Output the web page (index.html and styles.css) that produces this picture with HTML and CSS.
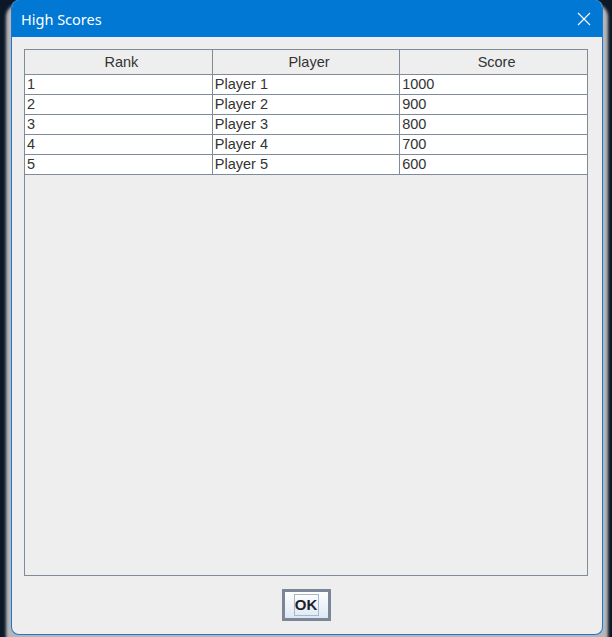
FILE: index.html
```html
<!DOCTYPE html>
<html>
<head>
<meta charset="utf-8">
<link rel="stylesheet" href="styles.css">
</head>
<body>
<div class="window">
  <div class="titlebar">
    <span class="title">High Scores</span>
    <svg class="close" width="14" height="14" viewBox="0 0 14 14"><path d="M1 1 L13 13 M13 1 L1 13" stroke="#fff" stroke-width="1.1" fill="none"/></svg>
  </div>
  <div class="content">
    <div class="pane">
      <table class="scores">
        <thead>
          <tr><th>Rank</th><th>Player</th><th>Score</th></tr>
        </thead>
        <tbody>
          <tr><td>1</td><td>Player 1</td><td>1000</td></tr>
          <tr><td>2</td><td>Player 2</td><td>900</td></tr>
          <tr><td>3</td><td>Player 3</td><td>800</td></tr>
          <tr><td>4</td><td>Player 4</td><td>700</td></tr>
          <tr><td>5</td><td>Player 5</td><td>600</td></tr>
        </tbody>
      </table>
    </div>
    <div class="footer">
      <button class="ok"><span class="focus">OK</span></button>
    </div>
  </div>
</div>
</body>
</html>
```
FILE: styles.css
```css
html, body {
  margin: 0;
  padding: 0;
  background: #0c1827;
  height: 637px;
  overflow: hidden;
}
body {
  padding-left: 11px;
}
.window {
  width: 590px;
  height: 634px;
  background: #eeeeee;
  border: 1px solid #1a78d0;
  border-top: none;
  border-radius: 8px;
  display: flex;
  flex-direction: column;
  overflow: hidden;
  box-shadow: 0 9px 3px 5px rgba(200, 200, 200, 0.9);
}
.titlebar {
  height: 37px;
  flex: none;
  background: #0078d4;
  display: flex;
  align-items: center;
  justify-content: space-between;
  padding: 0 12px 0 10px;
  margin: 0 -1px;
}
.title {
  color: #ffffff;
  font-family: "Noto Sans", "Open Sans", sans-serif;
  font-size: 14.5px;
}
.close {
  display: block;
  margin-top: 1px;
}
.content {
  flex: 1;
  display: flex;
  flex-direction: column;
  padding: 12px 14px 0 12px;
}
.pane {
  height: 525px;
  border: 1px solid #7f8b99;
  background: #eeeeee;
  flex: none;
}
.scores {
  width: 100%;
  border-collapse: collapse;
  table-layout: fixed;
  font-family: "Liberation Sans", Arial, sans-serif;
  font-size: 14.5px;
  color: #333333;
}
.scores th {
  height: 24px;
  font-weight: normal;
  text-align: center;
  background: #eeeeee;
  border: 1px solid #7f8b99;
  border-top: none;
  padding: 0 0 0 6px;
  line-height: 24px;
}
.scores td {
  height: 19px;
  background: #ffffff;
  border: 1px solid #7f8b99;
  padding: 0 0 0 2px;
  line-height: 19px;
}
.scores tr > :first-child { border-left: none; }
.scores tr > :last-child { border-right: none; }
.footer {
  flex: 1;
  display: flex;
  justify-content: center;
  padding-top: 13px;
}
.ok {
  width: 49px;
  height: 32px;
  border: 3px solid #7b8699;
  background: linear-gradient(#ffffff, #dde8f4);
  padding: 0;
  display: flex;
  align-items: center;
  justify-content: center;
  font-family: "Liberation Sans", Arial, sans-serif;
  font-weight: bold;
  font-size: 15px;
  color: #1f1f2a;
}
.focus {
  display: block;
  border: 1px solid #a8b8cc;
  width: 23px;
  height: 20px;
  line-height: 20px;
  text-align: center;
}
```
